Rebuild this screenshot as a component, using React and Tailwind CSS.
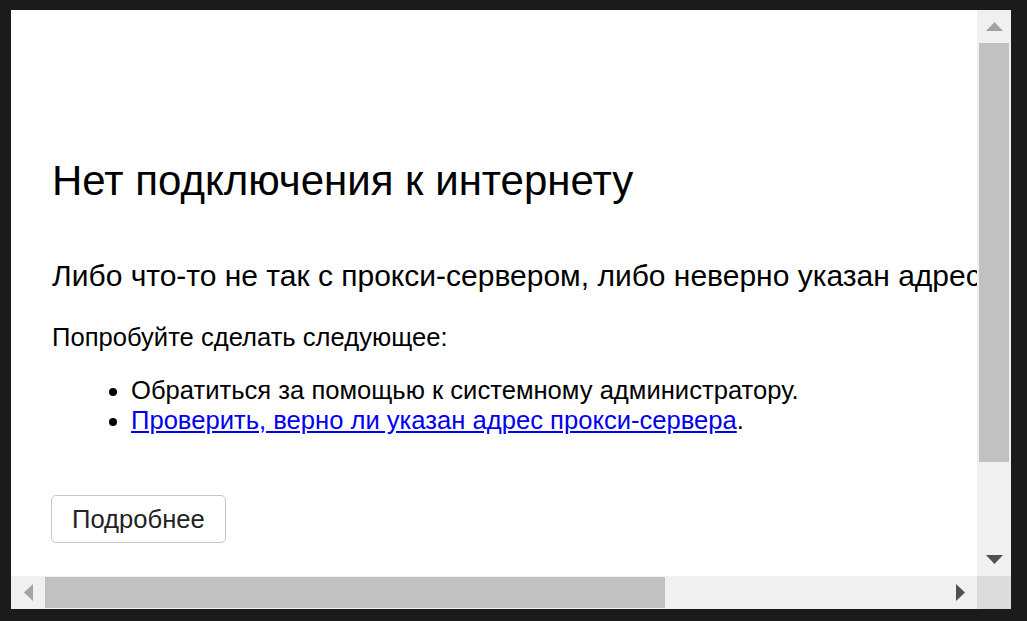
export default function App() {
  return (
    <div className="w-[1027px] h-[621px] bg-[#1b1b1b] pt-[10px] pl-[11px] overflow-hidden">
      <div className="w-[1000px] h-[599px] bg-white grid grid-cols-[966px_34px] grid-rows-[566px_33px]">
        {/* page content */}
        <div className="overflow-hidden whitespace-nowrap font-['Liberation_Sans',Arial,sans-serif] text-black pl-[41px] pt-[147px]">
          <h1 className="text-[42px] leading-[48px]">Нет подключения к интернету</h1>
          <p className="text-[30px] leading-[34px] mt-[54px]">
            Либо что-то не так с прокси-сервером, либо неверно указан адрес прокси-сервера.
          </p>
          <p className="text-[25.6px] leading-[30px] mt-[29px]">Попробуйте сделать следующее:</p>
          <ul className="list-disc pl-[79px] mt-[23px] text-[25.6px] leading-[30px]">
            <li>Обратиться за помощью к системному администратору.</li>
            <li>
              <a href="#" className="text-[#0000ee] underline">
                Проверить, верно ли указан адрес прокси-сервера
              </a>
              .
            </li>
          </ul>
          <button className="-ml-px mt-[60px] h-[48px] px-[20px] border-[1.5px] border-[#c6c6c6] rounded-[5px] bg-white text-[25.6px] text-[#222]">
            Подробнее
          </button>
        </div>

        {/* vertical scrollbar */}
        <div className="bg-[#f0f0f0] flex flex-col">
          <div className="h-[33px] flex items-center justify-center">
            <svg width="17" height="9" viewBox="0 0 17 9">
              <polygon points="8.5,0 17,9 0,9" fill="#a3a3a3" />
            </svg>
          </div>
          <div className="flex-1 px-[2px]">
            <div className="h-[419px] bg-[#c1c1c1]" />
          </div>
          <div className="h-[33px] flex items-center justify-center">
            <svg width="17" height="9" viewBox="0 0 17 9">
              <polygon points="0,0 17,0 8.5,9" fill="#505050" />
            </svg>
          </div>
        </div>

        {/* horizontal scrollbar */}
        <div className="bg-[#f0f0f0] flex items-stretch">
          <div className="w-[34px] flex items-center justify-center">
            <svg width="9" height="17" viewBox="0 0 9 17">
              <polygon points="9,0 9,17 0,8.5" fill="#a3a3a3" />
            </svg>
          </div>
          <div className="flex-1 py-[1px]">
            <div className="w-[620px] h-full bg-[#c1c1c1]" />
          </div>
          <div className="w-[34px] flex items-center justify-center">
            <svg width="9" height="17" viewBox="0 0 9 17">
              <polygon points="0,0 9,8.5 0,17" fill="#505050" />
            </svg>
          </div>
        </div>
        <div className="bg-[#dcdcdc]" />
      </div>
    </div>
  );
}
